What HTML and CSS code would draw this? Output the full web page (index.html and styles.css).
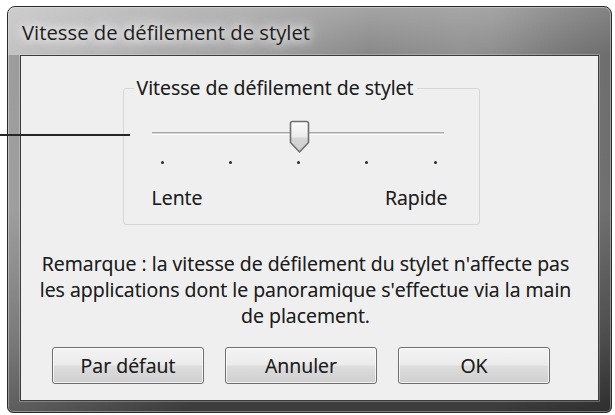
FILE: index.html
```html
<!DOCTYPE html>
<html lang="fr">
<head>
    <meta charset="UTF-8">
    <title>Vitesse de défilement de stylet</title>
    <link rel="stylesheet" href="styles.css">
</head>
<body>
    <div class="window">
        <div class="titlebar">
            <span class="title">Vitesse de défilement de stylet</span>
        </div>
        <div class="client">
            <fieldset class="group">
                <legend>Vitesse de défilement de stylet</legend>
                <div class="slider">
                    <div class="track"></div>
                    <svg class="thumb" width="21" height="34" viewBox="0 0 21 34">
                        <defs>
                            <linearGradient id="thumb-fill" x1="0" y1="0" x2="0" y2="1">
                                <stop offset="0" stop-color="#fbfbfb"/>
                                <stop offset="0.5" stop-color="#ececec"/>
                                <stop offset="0.55" stop-color="#d6d6d6"/>
                                <stop offset="1" stop-color="#cfcfcf"/>
                            </linearGradient>
                        </defs>
                        <path d="M3.5 1.5 H17.5 Q19.5 1.5 19.5 3.5 V22.5 L10.5 32 L1.5 22.5 V3.5 Q1.5 1.5 3.5 1.5 Z"
                              fill="url(#thumb-fill)" stroke="#6e6e6e" stroke-width="1.6" stroke-linejoin="round"/>
                    </svg>
                </div>
                <div class="ticks">
                    <span class="tick"></span>
                    <span class="tick"></span>
                    <span class="tick"></span>
                    <span class="tick"></span>
                    <span class="tick"></span>
                </div>
                <div class="labels">
                    <span>Lente</span>
                    <span>Rapide</span>
                </div>
            </fieldset>
            <p class="note">
                Remarque : la vitesse de défilement du stylet n'affecte pas<br>
                les applications dont le panoramique s'effectue via la main<br>
                de placement.
            </p>
            <div class="buttons">
                <button class="btn">Par défaut</button>
                <button class="btn">Annuler</button>
                <button class="btn">OK</button>
            </div>
        </div>
    </div>
    <div class="callout"></div>
</body>
</html>
```

FILE: styles.css
```css
* {
    box-sizing: border-box;
}

body {
    margin: 0;
    padding: 6px 0 0 7px;
    background: #ffffff;
    font-family: "Open Sans", "Noto Sans", sans-serif;
    color: #1c1c1c;
    width: 615px;
    height: 415px;
    overflow: hidden;
    position: relative;
}

/* cadre de la fenêtre */
.window {
    width: 605px;
    height: 407px;
    padding: 0 12px 11px 12px;
    border: 1px solid #2a2a2a;
    border-radius: 8px 8px 6px 6px;
    background:
        linear-gradient(to right, rgba(255, 255, 255, 0.18) 0%, rgba(255, 255, 255, 0) 30%, rgba(0, 0, 0, 0) 80%, rgba(0, 0, 0, 0.2) 100%),
        linear-gradient(to bottom, #a4a4a4 0%, #888888 12%, #8a8a8a 50%, #5e5e5e 82%, #3a3a3a 100%);
    box-shadow: inset 0 0 0 1px rgba(255, 255, 255, 0.35);
    display: flex;
    flex-direction: column;
}

.titlebar {
    height: 48px;
    margin: 0 -12px;
    padding: 11px 0 0 14px;
    border-radius: 7px 7px 0 0;
    background: linear-gradient(to right, rgba(225, 225, 225, 0.55) 0%, rgba(210, 210, 210, 0.35) 40%, rgba(120, 120, 120, 0) 60%, rgba(170, 170, 170, 0.25) 75%, rgba(120, 120, 120, 0) 90%);
}

.title {
    font-size: 20.3px;
    color: #1e1e1e;
    text-shadow: 0 0 8px #ffffff, 0 0 14px rgba(255, 255, 255, 0.9), 0 0 20px rgba(255, 255, 255, 0.7);
}

.client {
    flex: 1;
    background: #efefef;
    border: 1px solid #3c3c3c;
    box-shadow: 0 0 0 1px rgba(255, 255, 255, 0.25);
    padding: 0 27px 0 10px;
    display: flex;
    flex-direction: column;
    align-items: center;
    font-size: 19.5px;
    text-shadow: 0 0 0.5px rgba(0, 0, 0, 0.45);
}

/* zone de groupe */
.group {
    width: 357px;
    margin: 22px 0 0 0;
    padding: 0 0 16px 0;
    border: 1px solid #d6d6d6;
    border-radius: 3px;
}

.group legend {
    margin-left: 10px;
    padding: 0 3px;
    line-height: 20px;
}

.slider {
    position: relative;
    height: 34px;
    margin: 22px 35px 0 28px;
}

.track {
    position: absolute;
    left: 0;
    right: 0;
    top: 12px;
    height: 3px;
    border-top: 1px solid #a9a9a9;
    border-bottom: 1px solid #ffffff;
    background: #d4d4d4;
}

.thumb {
    position: absolute;
    left: 137px;
    top: 0;
}

.ticks {
    display: flex;
    justify-content: space-between;
    margin: 7px 42px 0 37px;
}

.tick {
    width: 3px;
    height: 3px;
    border-radius: 50%;
    background: #2a2a2a;
}

.labels {
    display: flex;
    justify-content: space-between;
    margin: 24px 31px 0 28px;
    line-height: 20px;
}

/* remarque */
.note {
    margin: 26px 0 0 9px;
    line-height: 26px;
    text-align: center;
    white-space: nowrap;
}

.buttons {
    display: flex;
    gap: 21px;
    margin-top: 18px;
}

.btn {
    width: 152px;
    height: 37px;
    font-family: inherit;
    font-size: inherit;
    color: #1c1c1c;
    text-shadow: inherit;
    border: 1px solid #707070;
    border-radius: 3px;
    background: linear-gradient(to bottom, #f3f3f3 0%, #ebebeb 48%, #dddddd 52%, #cfcfcf 100%);
    box-shadow: inset 0 0 0 1px rgba(255, 255, 255, 0.7);
}

/* trait de légende */
.callout {
    position: absolute;
    left: 0;
    top: 134px;
    width: 130px;
    height: 2px;
    background: #262626;
}
```
